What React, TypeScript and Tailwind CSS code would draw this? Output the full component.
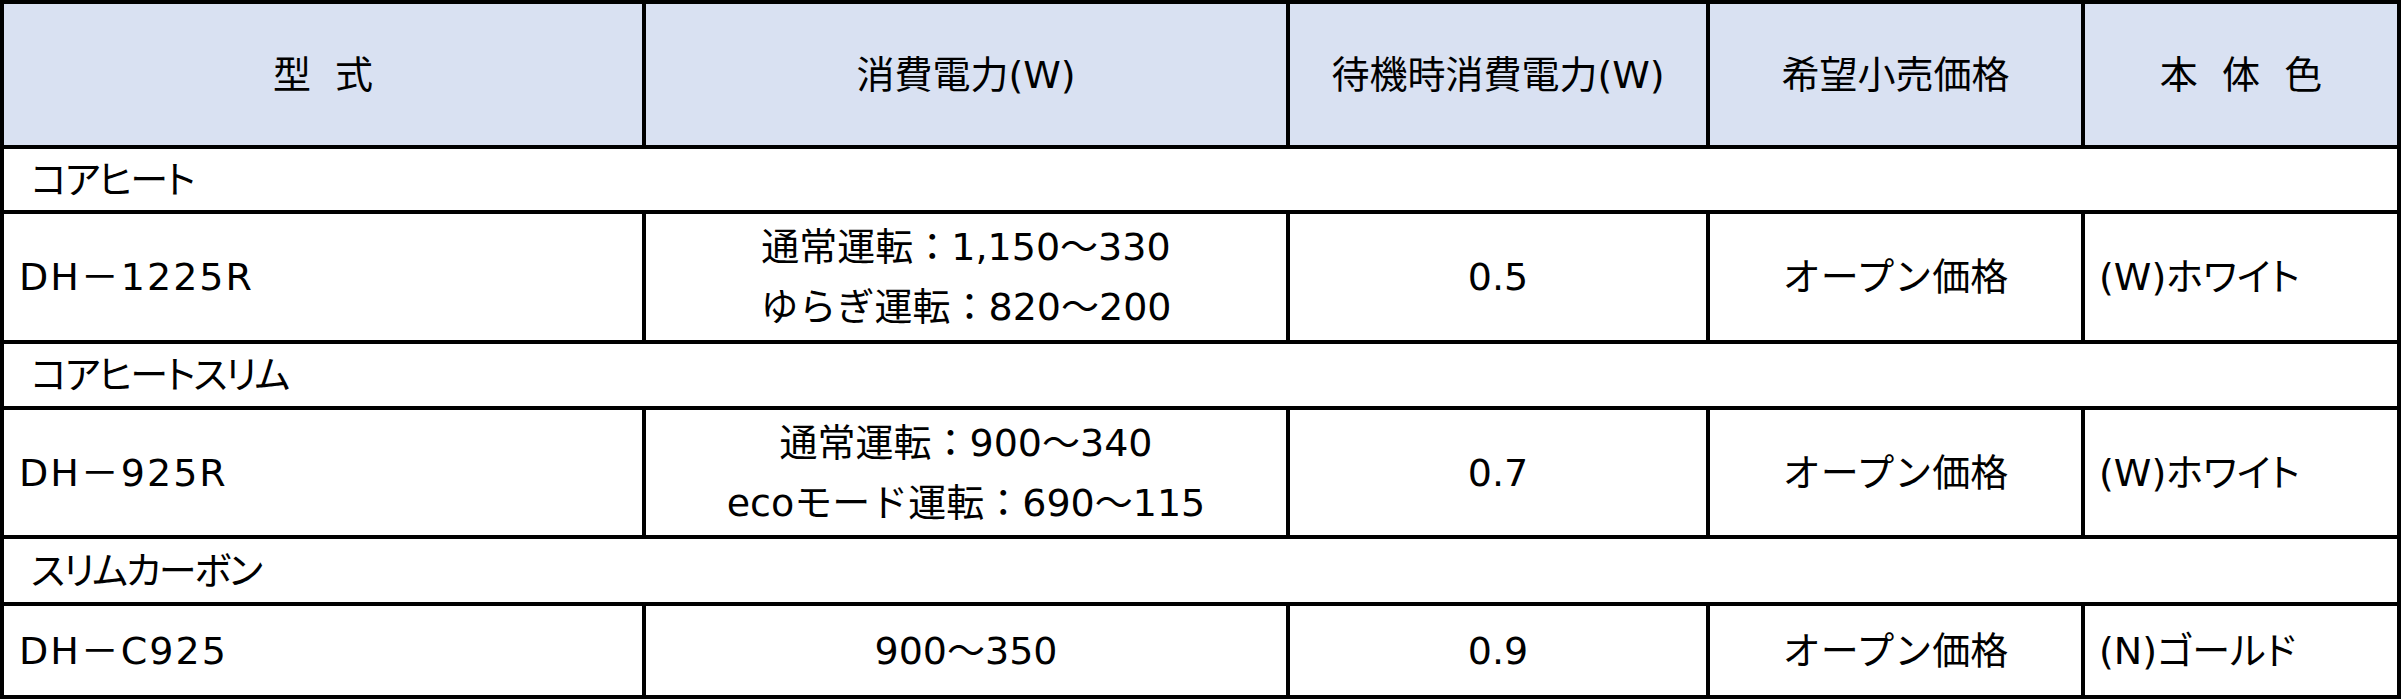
const font = { fontFamily: '"DejaVu Sans", "Noto Sans CJK JP", sans-serif' }
const proportional = { fontFeatureSettings: '"palt"' }

type Product = {
  category: string
  model: string
  power: string[]
  standby: string
  price: string
  color: string
}

const products: Product[] = [
  {
    category: 'コアヒート',
    model: 'DH－1225R',
    power: ['通常運転：1,150～330', 'ゆらぎ運転：820～200'],
    standby: '0.5',
    price: 'オープン価格',
    color: '(W)ホワイト',
  },
  {
    category: 'コアヒートスリム',
    model: 'DH－925R',
    power: ['通常運転：900～340', 'ecoモード運転：690～115'],
    standby: '0.7',
    price: 'オープン価格',
    color: '(W)ホワイト',
  },
  {
    category: 'スリムカーボン',
    model: 'DH－C925',
    power: ['900～350'],
    standby: '0.9',
    price: 'オープン価格',
    color: '(N)ゴールド',
  },
]

const headers = ['型 式', '消費電力(W)', '待機時消費電力(W)', '希望小売価格', '本 体 色']

export default function App() {
  return (
    <div className="min-h-[700px] w-[2405px] bg-white text-black" style={font}>
      <div className="grid w-[2401px] grid-cols-[638px_640px_416px_371px_312px] grid-rows-[141px_61px_126px_62px_125px_63px_89px] gap-[4px] bg-black p-[4px] text-[38px] leading-none">
        {headers.map((header) => (
          <div key={header} className="flex items-center justify-center bg-[#d9e1f2] whitespace-pre">
            {header.replace(/ /g, '  ')}
          </div>
        ))}

        {products.map((product) => (
          <ProductRows key={product.model} product={product} />
        ))}
      </div>
    </div>
  )
}

function ProductRows({ product }: { product: Product }) {
  return (
    <>
      <div
        className="col-span-5 flex items-center bg-white pl-[27px] tracking-[-2px]"
        style={proportional}
      >
        {product.category}
      </div>
      <div className="flex items-center bg-white pl-[15px] tracking-[2px]">{product.model}</div>
      <div className="flex flex-col items-center justify-center bg-white leading-[60px]">
        {product.power.map((line) => (
          <span key={line}>{line}</span>
        ))}
      </div>
      <div className="flex items-center justify-center bg-white">{product.standby}</div>
      <div className="flex items-center justify-center bg-white">{product.price}</div>
      <div className="flex items-center bg-white pl-[14px]" style={proportional}>
        {product.color}
      </div>
    </>
  )
}
